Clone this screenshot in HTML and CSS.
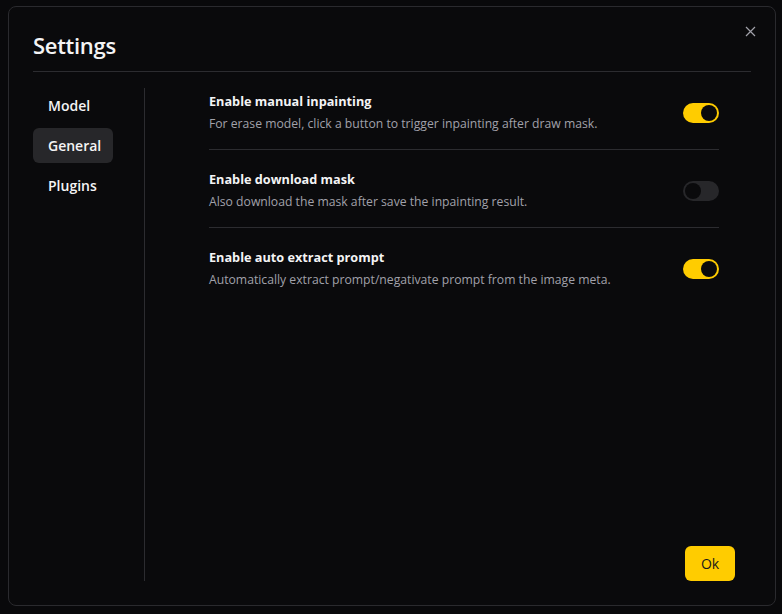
FILE: index.html
```html
<!DOCTYPE html>
<html lang="en">
<head>
    <meta charset="UTF-8">
    <meta name="viewport" content="width=device-width, initial-scale=1.0">
    <title>Settings</title>
    <link rel="stylesheet" href="styles.css">
</head>
<body>

<div class="dialog">
    <button class="close-btn" aria-label="Close">
        <svg width="11" height="11" viewBox="0 0 11 11"><path d="M1 1L10 10M10 1L1 10" stroke="currentColor" stroke-width="1.2" fill="none"/></svg>
    </button>

    <div class="dialog-header">
        <h2>Settings</h2>
    </div>

    <div class="dialog-body">
        <div class="sidebar">
            <div class="tab">Model</div>
            <div class="tab active">General</div>
            <div class="tab">Plugins</div>
        </div>

        <div class="content">
            <div class="setting-row">
                <div class="setting-text">
                    <div class="setting-title">Enable manual inpainting</div>
                    <div class="setting-desc">For erase model, click a button to trigger inpainting after draw mask.</div>
                </div>
                <div class="switch on"><span class="thumb"></span></div>
            </div>

            <div class="setting-row">
                <div class="setting-text">
                    <div class="setting-title">Enable download mask</div>
                    <div class="setting-desc">Also download the mask after save the inpainting result.</div>
                </div>
                <div class="switch"><span class="thumb"></span></div>
            </div>

            <div class="setting-row last">
                <div class="setting-text">
                    <div class="setting-title">Enable auto extract prompt</div>
                    <div class="setting-desc">Automatically extract prompt/negativate prompt from the image meta.</div>
                </div>
                <div class="switch on"><span class="thumb"></span></div>
            </div>

            <div class="footer">
                <button class="ok-btn">Ok</button>
            </div>
        </div>
    </div>
</div>

</body>
</html>
```

FILE: styles.css
```css
body {
    margin: 0;
    background-color: #09090b;
    font-family: "Open Sans", "Noto Sans", sans-serif;
    color: #f4f4f5;
    height: 614px;
    overflow: hidden;
}

.dialog {
    position: relative;
    box-sizing: border-box;
    margin: 6px 0 0 8px;
    width: 768px;
    height: 600px;
    background-color: #0a0a0c;
    border: 1px solid #2a2a2e;
    border-radius: 8px;
    padding: 23px 24px 24px 24px;
    display: flex;
    flex-direction: column;
}

.close-btn {
    position: absolute;
    top: 19px;
    right: 19px;
    background: none;
    border: none;
    padding: 0;
    color: #a1a1aa;
    cursor: pointer;
    display: flex;
}

.dialog-header {
    border-bottom: 1px solid #2c2c30;
    padding-bottom: 11px;
}

.dialog-header h2 {
    margin: 0;
    font-size: 22px;
    line-height: 30px;
    font-weight: 600;
    letter-spacing: -0.3px;
}

.dialog-body {
    flex: 1;
    display: flex;
}

/* Sidebar */
.sidebar {
    width: 112px;
    box-sizing: border-box;
    margin-top: 16px;
    border-right: 1px solid #2c2c30;
    display: flex;
    flex-direction: column;
    gap: 5px;
}

.tab {
    width: 80px;
    box-sizing: border-box;
    height: 35px;
    line-height: 35px;
    padding-left: 15px;
    font-size: 14px;
    font-weight: 600;
    border-radius: 6px;
    cursor: pointer;
}

.tab.active {
    background-color: #27272a;
}

/* Content */
.content {
    flex: 1;
    display: flex;
    flex-direction: column;
    padding: 0 16px 0 64px;
}

.setting-row {
    display: flex;
    align-items: center;
    justify-content: space-between;
    padding: 19px 0 15px;
    margin-right: 16px;
    border-bottom: 1px solid #2c2c30;
}

.setting-row.last {
    border-bottom: none;
}

.setting-title {
    font-size: 12.7px;
    font-weight: 700;
    line-height: 20px;
}

.setting-desc {
    margin-top: 3px;
    font-size: 12.2px;
    line-height: 20px;
    color: #a1a1aa;
}

.switch {
    width: 36px;
    height: 20px;
    box-sizing: border-box;
    border-radius: 10px;
    background-color: #27272a;
    padding: 2px;
    display: flex;
}

.switch .thumb {
    width: 16px;
    height: 16px;
    border-radius: 50%;
    background-color: #0a0a0c;
}

.switch.on {
    background-color: #ffcc00;
    justify-content: flex-end;
}

.footer {
    margin-top: auto;
    display: flex;
    justify-content: flex-end;
}

.ok-btn {
    background-color: #ffcc00;
    color: #18181b;
    border: none;
    border-radius: 6px;
    width: 50px;
    height: 35px;
    font-family: inherit;
    font-size: 14px;
    font-weight: 500;
    cursor: pointer;
}
```
